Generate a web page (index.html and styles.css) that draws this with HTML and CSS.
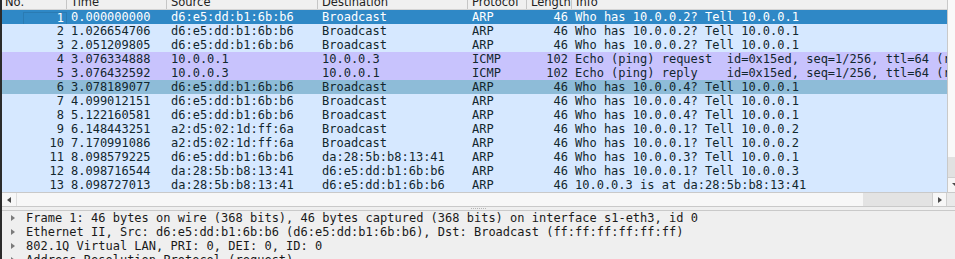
FILE: index.html
```html
<!DOCTYPE html>
<html lang="en">
<head>
    <meta charset="UTF-8">
    <title>Packets</title>
    <link rel="stylesheet" href="styles.css">
</head>
<body>
    <div class="strip"></div>
    <div class="main">
        <div class="list-area">
            <div class="packets">
                <div class="head">
                    <div class="hcell no">No.</div>
                    <div class="hcell">Time</div>
                    <div class="hcell">Source</div>
                    <div class="hcell">Destination</div>
                    <div class="hcell">Protocol</div>
                    <div class="hcell">Length</div>
                    <div class="hcell last">Info</div>
                </div>
                <div class="row selected">
                    <div class="cell num focus">1</div><div class="cell">0.000000000</div><div class="cell">d6:e5:dd:b1:6b:b6</div><div class="cell">Broadcast</div><div class="cell">ARP</div><div class="cell len">46</div><div class="cell info">Who has 10.0.0.2? Tell 10.0.0.1</div>
                </div>
                <div class="row arp">
                    <div class="cell num">2</div><div class="cell">1.026654706</div><div class="cell">d6:e5:dd:b1:6b:b6</div><div class="cell">Broadcast</div><div class="cell">ARP</div><div class="cell len">46</div><div class="cell info">Who has 10.0.0.2? Tell 10.0.0.1</div>
                </div>
                <div class="row arp">
                    <div class="cell num">3</div><div class="cell">2.051209805</div><div class="cell">d6:e5:dd:b1:6b:b6</div><div class="cell">Broadcast</div><div class="cell">ARP</div><div class="cell len">46</div><div class="cell info">Who has 10.0.0.2? Tell 10.0.0.1</div>
                </div>
                <div class="row icmp">
                    <div class="cell num">4</div><div class="cell">3.076334888</div><div class="cell">10.0.0.1</div><div class="cell">10.0.0.3</div><div class="cell">ICMP</div><div class="cell len">102</div><div class="cell info">Echo (ping) request  id=0x15ed, seq=1/256, ttl=64 (reply in 5)</div>
                </div>
                <div class="row icmp">
                    <div class="cell num">5</div><div class="cell">3.076432592</div><div class="cell">10.0.0.3</div><div class="cell">10.0.0.1</div><div class="cell">ICMP</div><div class="cell len">102</div><div class="cell info">Echo (ping) reply    id=0x15ed, seq=1/256, ttl=64 (request in 4)</div>
                </div>
                <div class="row hover">
                    <div class="cell num">6</div><div class="cell">3.078189077</div><div class="cell">d6:e5:dd:b1:6b:b6</div><div class="cell">Broadcast</div><div class="cell">ARP</div><div class="cell len">46</div><div class="cell info">Who has 10.0.0.4? Tell 10.0.0.1</div>
                </div>
                <div class="row arp">
                    <div class="cell num">7</div><div class="cell">4.099012151</div><div class="cell">d6:e5:dd:b1:6b:b6</div><div class="cell">Broadcast</div><div class="cell">ARP</div><div class="cell len">46</div><div class="cell info">Who has 10.0.0.4? Tell 10.0.0.1</div>
                </div>
                <div class="row arp">
                    <div class="cell num">8</div><div class="cell">5.122160581</div><div class="cell">d6:e5:dd:b1:6b:b6</div><div class="cell">Broadcast</div><div class="cell">ARP</div><div class="cell len">46</div><div class="cell info">Who has 10.0.0.4? Tell 10.0.0.1</div>
                </div>
                <div class="row arp">
                    <div class="cell num">9</div><div class="cell">6.148443251</div><div class="cell">a2:d5:02:1d:ff:6a</div><div class="cell">Broadcast</div><div class="cell">ARP</div><div class="cell len">46</div><div class="cell info">Who has 10.0.0.1? Tell 10.0.0.2</div>
                </div>
                <div class="row arp">
                    <div class="cell num">10</div><div class="cell">7.170991086</div><div class="cell">a2:d5:02:1d:ff:6a</div><div class="cell">Broadcast</div><div class="cell">ARP</div><div class="cell len">46</div><div class="cell info">Who has 10.0.0.1? Tell 10.0.0.2</div>
                </div>
                <div class="row arp">
                    <div class="cell num">11</div><div class="cell">8.098579225</div><div class="cell">d6:e5:dd:b1:6b:b6</div><div class="cell">da:28:5b:b8:13:41</div><div class="cell">ARP</div><div class="cell len">46</div><div class="cell info">Who has 10.0.0.3? Tell 10.0.0.1</div>
                </div>
                <div class="row arp">
                    <div class="cell num">12</div><div class="cell">8.098716544</div><div class="cell">da:28:5b:b8:13:41</div><div class="cell">d6:e5:dd:b1:6b:b6</div><div class="cell">ARP</div><div class="cell len">46</div><div class="cell info">Who has 10.0.0.1? Tell 10.0.0.3</div>
                </div>
                <div class="row arp">
                    <div class="cell num">13</div><div class="cell">8.098727013</div><div class="cell">da:28:5b:b8:13:41</div><div class="cell">d6:e5:dd:b1:6b:b6</div><div class="cell">ARP</div><div class="cell len">46</div><div class="cell info">10.0.0.3 is at da:28:5b:b8:13:41</div>
                </div>
            </div>
            <div class="vscroll">
                <div class="vthumb"></div>
                <div class="vtrack"></div>
                <div class="vbutton"><span class="arrow-down"></span></div>
            </div>
        </div>
        <div class="hscroll-row">
            <div class="hbutton left"><span class="arrow-left"></span></div>
            <div class="hthumb"></div>
            <div class="htrack"></div>
            <div class="hbutton right"><span class="arrow-right"></span></div>
            <div class="corner"></div>
        </div>
        <div class="splitter"><span class="grip"></span></div>
        <div class="details">
            <div class="tree-row"><span class="expander"></span>Frame 1: 46 bytes on wire (368 bits), 46 bytes captured (368 bits) on interface s1-eth3, id 0</div>
            <div class="tree-row"><span class="expander"></span>Ethernet II, Src: d6:e5:dd:b1:6b:b6 (d6:e5:dd:b1:6b:b6), Dst: Broadcast (ff:ff:ff:ff:ff:ff)</div>
            <div class="tree-row"><span class="expander"></span>802.1Q Virtual LAN, PRI: 0, DEI: 0, ID: 0</div>
            <div class="tree-row"><span class="expander"></span>Address Resolution Protocol (request)</div>
        </div>
    </div>
</body>
</html>
```

FILE: styles.css
```css
html, body {
    margin: 0;
    padding: 0;
    height: 259px;
    overflow: hidden;
}
body {
    display: flex;
    background-color: #efefef;
    font-family: "DejaVu Sans Mono", "Liberation Mono", monospace;
    font-size: 12px;
    color: #12272e;
}
.strip {
    width: 2px;
    flex: none;
    background-color: #2b2b2b;
}
.main {
    flex: 1;
    display: flex;
    flex-direction: column;
    min-width: 0;
    min-height: 0;
}
.list-area {
    display: flex;
    flex: none;
    height: 192px;
    background-color: #ffffff;
}
.packets {
    width: 945px;
    flex: none;
    overflow: hidden;
}
.head, .row {
    display: grid;
    grid-template-columns: 65px 100px 151px 150px 59px 45px 1fr;
}
.head {
    height: 9px;
    overflow: hidden;
    background-color: #f0f0f0;
    border-bottom: 1px solid #d4d4d4;
    font-family: "DejaVu Sans", sans-serif;
    font-size: 11.5px;
    line-height: 5px;
    color: #222222;
}
.hcell {
    padding-left: 4px;
    border-right: 1px solid #c6c6c6;
    white-space: nowrap;
    overflow: hidden;
}
.hcell.no {
    padding-left: 3px;
}
.hcell.last {
    border-right: none;
}
.row {
    height: 14px;
    line-height: 14px;
}
.cell {
    padding-left: 4px;
    white-space: pre;
    overflow: hidden;
}
.cell.num {
    text-align: right;
    padding-left: 0;
    padding-right: 3px;
}
.cell.len {
    text-align: right;
    padding-left: 0;
    padding-right: 4px;
}
.cell.info {
    padding-left: 3px;
    overflow: visible;
}
.row.arp {
    background-color: #d6e8ff;
}
.row.icmp {
    background-color: #c8c3fd;
}
.row.hover {
    background-color: #8ebcd8;
}
.row.selected {
    background-color: #2f88c6;
    color: #ffffff;
}
.cell.focus {
    margin: 2px 0 0 21px;
    height: 11px;
    line-height: 10px;
    border: 1px solid #2a7bb3;
    border-bottom: none;
    padding-right: 2px;
}
.vscroll {
    width: 7px;
    flex: none;
    border-left: 1px solid #c9c9c9;
    display: flex;
    flex-direction: column;
}
.vthumb {
    height: 157px;
    background-color: #f9f9f9;
}
.vtrack {
    flex: 1;
    background-color: #e1e1e1;
}
.vbutton {
    height: 14px;
    background-color: #f6f6f6;
    border-top: 1px solid #cfcfcf;
    position: relative;
}
.arrow-down {
    position: absolute;
    left: 4px;
    top: 5px;
    border-top: 3px solid #4a4a4a;
    border-left: 3px solid transparent;
    border-right: 3px solid transparent;
}
.hscroll-row {
    display: flex;
    flex: none;
    height: 13px;
    border-top: 1px solid #c9c9c9;
    border-bottom: 1px solid #c9c9c9;
}
.hbutton {
    width: 13px;
    background-color: #f7f7f7;
    display: flex;
    align-items: center;
    justify-content: center;
}
.hbutton.left {
    width: 14px;
    border-right: 1px solid #dedede;
}
.hbutton.right {
    border-left: 1px solid #cfcfcf;
    border-right: 1px solid #cfcfcf;
}
.arrow-left {
    border-right: 4px solid #4a4a4a;
    border-top: 3px solid transparent;
    border-bottom: 3px solid transparent;
}
.arrow-right {
    border-left: 4px solid #4a4a4a;
    border-top: 3px solid transparent;
    border-bottom: 3px solid transparent;
}
.hthumb {
    width: 846px;
    background-color: #f7f7f7;
}
.htrack {
    flex: 1;
    background-color: #e3e3e3;
}
.corner {
    width: 8px;
    background-color: #e9e9e9;
}
.splitter {
    flex: none;
    height: 3px;
    border-bottom: 1px solid #c9c9c9;
    display: flex;
    justify-content: center;
    align-items: center;
}
.grip {
    width: 15px;
    border-top: 1px dotted #b5b5b5;
}
.details {
    flex: 1;
    min-height: 0;
    overflow: hidden;
    background-color: #efefef;
    color: #1a1a1a;
}
.tree-row {
    height: 14px;
    line-height: 14px;
    white-space: pre;
    display: flex;
    align-items: center;
}
.expander {
    width: 0;
    height: 0;
    margin: 0 11px 0 9px;
    border-left: 4px solid #7b7b7b;
    border-top: 3px solid transparent;
    border-bottom: 3px solid transparent;
}
```
